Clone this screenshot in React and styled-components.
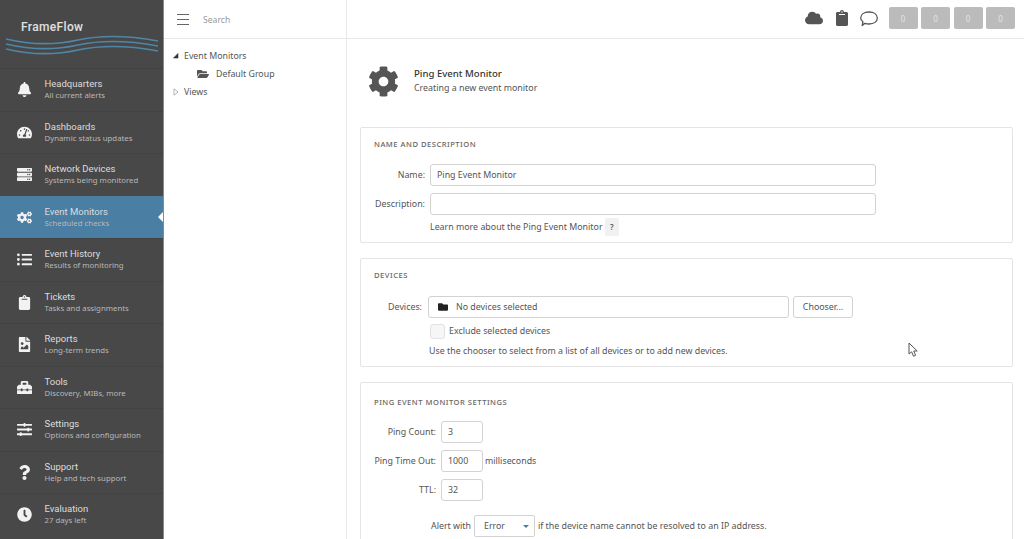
import React from "react";
import styled, { createGlobalStyle } from "styled-components";
import {
  FaBell, FaTachometerAlt, FaServer, FaCogs, FaListUl, FaClipboard, FaFileImage, FaToolbox,
  FaSlidersH, FaQuestion, FaClock, FaFolderOpen, FaFolder, FaCloud, FaCog,
} from "react-icons/fa";

const Global = createGlobalStyle`
  html, body { margin: 0; padding: 0; height: 539px; overflow: hidden; background: #fff; }
  * { box-sizing: border-box; }
  body { font-family: "Noto Sans", "Open Sans", sans-serif; font-size: 8.85px; color: #444; }
`;

const Shell = styled.div`display: flex; width: 1024px; height: 539px; overflow: hidden; position: relative;`;
const Sidebar = styled.nav`width: 164px; flex: none; background: #484848; border-right: 1px solid #8a8a8a; display: flex; flex-direction: column;`;
const Logo = styled.div`height: 68px; padding: 20px 0 0 6px; display: flex; flex-direction: column;`;
const LogoName = styled.div`font: 500 12px Roboto, sans-serif; letter-spacing: .35px; color: #e0e0e0; margin-left: 15px; height: 15px;`;
const Wave = styled.svg`display: block; width: 152px; height: 20px;`;
const NavItem = styled.div`
  height: 42.5px; flex: none; display: flex; align-items: center; position: relative;
  background: ${p => (p.$active ? "#4a7ea3" : "transparent")};
  border-top: 1px dotted ${p => (p.$active ? "#4a7ea3" : "#3e3e3e")};
`;
const NavIcon = styled.div`width: 44.5px; flex: none; display: flex; justify-content: center; padding-left: 5px; color: #f2f2f2; font-size: 15px; svg { display: block; }`;
const NavText = styled.div`display: flex; flex-direction: column; line-height: 12px;`;
const NavTitle = styled.span`font: 9.5px Roboto, sans-serif; color: #dcdcdc;`;
const NavSub = styled.span`font-size: 7.8px; color: #b8b8b8;`;
const Notch = styled.span`position: absolute; right: 0; top: 15px; border: 5px solid transparent; border-right: 5px solid #fff; border-left: 0;`;

const Column = styled.div`flex: 1; min-width: 0; display: flex; flex-direction: column;`;
const TopBar = styled.header`height: 39px; flex: none; display: flex; border-bottom: 1px solid #e8e8e8;`;
const SearchBox = styled.div`width: 183px; flex: none; border-right: 1px solid #e8e8e8; display: flex; align-items: center; padding: 1px 0 0 13px; gap: 14px;`;
const Burger = styled.div`width: 12px; height: 11px; border-top: 1px solid #666; border-bottom: 1px solid #666; position: relative;
  &::after { content: ""; position: absolute; left: 0; right: 0; top: 4px; height: 1px; background: #666; }`;
const SearchText = styled.span`font-size: 8.6px; color: #999;`;
const TopRight = styled.div`flex: 1; display: flex; align-items: center; justify-content: flex-end; padding: 0 9px 2px 0;`;
const TopIcons = styled.div`display: flex; align-items: center; margin-right: 11px; color: #555; svg { display: block; }`;
const TopIcon = styled.span`display: block; margin-left: ${p => p.$gap || 0}px; font-size: ${p => p.$size}px;`;
const Counters = styled.div`display: flex; gap: 3.5px;`;
const Counter = styled.div`width: 29px; height: 22px; background: #bbb; border-radius: 2px; color: #e4e4e4; font-size: 8px; display: flex; align-items: center; justify-content: center;`;

const Body = styled.div`flex: 1; min-height: 0; display: flex;`;
const Tree = styled.aside`width: 183px; flex: none; border-right: 1px solid #e8e8e8; padding: 8px 0 0 8px; display: flex; flex-direction: column;`;
const TreeRow = styled.div`height: 18px; display: flex; align-items: center; padding-left: ${p => p.$indent || 0}px; color: #555; font-size: 8.8px;`;
const CaretBox = styled.svg`width: 12px; height: 8px; flex: none; display: block;`;
const FolderIcon = styled.span`display: block; color: #555; font-size: 12px; margin-right: 7px; svg { display: block; }`;

const Main = styled.main`flex: 1; min-width: 0; padding: 27px 11px 0 13px; display: flex; flex-direction: column; gap: 15px; overflow: hidden;`;
const Hero = styled.div`display: flex; align-items: center; height: 46px; padding: 0 0 16px 8px; flex: none; color: #555;`;
const HeroIcon = styled.div`font-size: 31px; width: 46px; flex: none; svg { display: block; }`;
const HeroText = styled.div`display: flex; flex-direction: column; line-height: 14px;`;
const HeroTitle = styled.span`font-weight: 500; font-size: 9.6px; color: #333;`;
const HeroSub = styled.span`color: #555;`;
const Card = styled.section`flex: none; width: 653px; border: 1px solid #e4e4e4; border-radius: 2px; padding: ${p => p.$pad}px 13px 0; height: ${p => p.$h}px;`;
const CardTitle = styled.h3`margin: 0; font-size: 7.6px; line-height: 12px; font-weight: 500; letter-spacing: .5px; text-transform: uppercase; color: #666;`;
const Rows = styled.div`display: flex; flex-direction: column; gap: ${p => p.$gap}px; margin-top: ${p => p.$top}px;`;
const Row = styled.div`display: flex; align-items: center; min-height: 22px;`;
const Label = styled.label`flex: none; width: ${p => p.$w}px; margin-right: ${p => p.$gap}px; display: flex; justify-content: flex-end; white-space: nowrap; color: #555;`;
const Field = styled.div`
  flex: none; width: ${p => p.$w}px; height: 22px; border: 1px solid #d2d2d2; border-radius: 3px; background: #fff;
  display: flex; align-items: center; padding-left: ${p => p.$pad || 6}px; color: #555;
`;
const Hint = styled.div`display: flex; align-items: center; margin: ${p => p.$top || 0}px 0 0 ${p => p.$left}px; height: ${p => p.$h || 18}px; color: #555;`;
const Help = styled.span`width: 14px; height: 18px; margin-left: 0; background: #f1f1f1; border-radius: 2px; display: flex; align-items: center; justify-content: center; font-size: 8px; font-weight: 600;`;
const Chooser = styled.button`flex: none; width: 60px; height: 22px; margin-left: 4px; padding: 0; border: 1px solid #d2d2d2; border-radius: 3px; background: #fff; font: 8.85px "Noto Sans", sans-serif; color: #555;`;
const Check = styled.span`width: 15px; height: 15px; border: 1px solid #e2e2e2; background: #f6f6f6; border-radius: 3px; flex: none; margin-right: 4px;`;
const DarkFolder = styled.span`display: block; color: #222; font-size: 10px; margin-right: 8px; svg { display: block; }`;
const Unit = styled.span`margin-left: 2px; color: #555;`;
const AlertRow = styled.div`display: flex; align-items: center; margin: 14px 0 0 57px; color: #555; white-space: nowrap;`;
const Select = styled.div`width: 61px; height: 22px; flex: none; margin: 0 3px; border: 1px solid #d2d2d2; border-radius: 2px; padding-left: 9px; display: flex; align-items: center; justify-content: space-between;
  &::after { content: ""; margin-right: 5px; border-left: 3px solid transparent; border-right: 3px solid transparent; border-top: 3px solid #3f7fae; }`;
const Pointer = styled.svg`position: absolute; left: 908px; top: 342px;`;

const Caret = ({ open }) => (
  <CaretBox viewBox="0 0 12 8">
    {open
      ? <path d="M1.5 6 L6 1.5 L6 6 Z" fill="#333" stroke="#333" strokeWidth=".6" />
      : <path d="M2 .8 L6 4 L2 7.2 Z" fill="#fff" stroke="#aaa" strokeWidth=".9" />}
  </CaretBox>
);

const nav = [
  [FaBell, "Headquarters", "All current alerts"],
  [FaTachometerAlt, "Dashboards", "Dynamic status updates"],
  [FaServer, "Network Devices", "Systems being monitored"],
  [FaCogs, "Event Monitors", "Scheduled checks", true],
  [FaListUl, "Event History", "Results of monitoring"],
  [FaClipboard, "Tickets", "Tasks and assignments"],
  [FaFileImage, "Reports", "Long-term trends"],
  [FaToolbox, "Tools", "Discovery, MIBs, more"],
  [FaSlidersH, "Settings", "Options and configuration"],
  [FaQuestion, "Support", "Help and tech support"],
  [FaClock, "Evaluation", "27 days left"],
];

export default function App() {
  return (
    <Shell>
      <Global />
      <Sidebar>
        <Logo>
          <LogoName>FrameFlow</LogoName>
          <Wave viewBox="0 0 152 20" fill="none" stroke="#4f86a8" strokeWidth="1.7">
            <path d="M0 4 C25 10 50 10 72 5 C95 0 125 1 152 6" />
            <path d="M0 9 C25 15 50 15 72 10 C95 5 125 6 152 11" />
            <path d="M0 14 C25 20 50 20 72 15 C95 10 125 11 152 16" />
          </Wave>
        </Logo>
        {nav.map(([Icon, title, sub, active]) => (
          <NavItem key={title} $active={active}>
            <NavIcon><Icon /></NavIcon>
            <NavText>
              <NavTitle>{title}</NavTitle>
              <NavSub>{sub}</NavSub>
            </NavText>
            {active && <Notch />}
          </NavItem>
        ))}
      </Sidebar>
      <Column>
        <TopBar>
          <SearchBox><Burger /><SearchText>Search</SearchText></SearchBox>
          <TopRight>
            <TopIcons>
              <TopIcon $size={18}><FaCloud /></TopIcon>
              <TopIcon $size={16} $gap={11}><FaClipboard /></TopIcon>
              <TopIcon $gap={10} $size={18}>
                <svg width="18" height="17" viewBox="0 0 18 17" fill="none" stroke="#555" strokeWidth="1.3" strokeLinejoin="round">
                  <path d="M9 2 C14 2 17.3 4.5 17.3 8 C17.3 11.5 14 14 9 14 C7.6 14 6.3 13.8 5 13.3 L2.2 15.6 L2.9 11.8 C1.4 10.6 .7 9.4 .7 8 C.7 4.5 4 2 9 2 Z" />
                </svg>
              </TopIcon>
            </TopIcons>
            <Counters>{[0, 1, 2, 3].map(i => <Counter key={i}>0</Counter>)}</Counters>
          </TopRight>
        </TopBar>
        <Body>
          <Tree>
            <TreeRow><Caret open />Event Monitors</TreeRow>
            <TreeRow $indent={25}><FolderIcon><FaFolderOpen /></FolderIcon>Default Group</TreeRow>
            <TreeRow><Caret />Views</TreeRow>
          </Tree>
          <Main>
            <Hero>
              <HeroIcon><FaCog /></HeroIcon>
              <HeroText>
                <HeroTitle>Ping Event Monitor</HeroTitle>
                <HeroSub>Creating a new event monitor</HeroSub>
              </HeroText>
            </Hero>
            <Card $h={116} $pad={10}>
              <CardTitle>Name and description</CardTitle>
              <Rows $gap={7} $top={14}>
                <Row><Label $w={51} $gap={5}>Name:</Label><Field $w={446}>Ping Event Monitor</Field></Row>
                <Row><Label $w={51} $gap={5}>Description:</Label><Field $w={446} /></Row>
              </Rows>
              <Hint $left={56} $h={19} $top={2}>Learn more about the Ping Event Monitor&nbsp;<Help>?</Help></Hint>
            </Card>
            <Card $h={109} $pad={10}>
              <CardTitle>Devices</CardTitle>
              <Rows $gap={6} $top={15}>
                <Row>
                  <Label $w={48} $gap={6}>Devices:</Label>
                  <Field $w={361} $pad={9}><DarkFolder><FaFolder /></DarkFolder>No devices selected</Field>
                  <Chooser>Chooser...</Chooser>
                </Row>
              </Rows>
              <Hint $left={56} $h={16} $top={5}><Check />Exclude selected devices</Hint>
              <Hint $left={55} $h={16} $top={4}>Use the chooser to select from a list of all devices or to add new devices.</Hint>
            </Card>
            <Card $h={200} $pad={13}>
              <CardTitle>Ping Event Monitor Settings</CardTitle>
              <Rows $gap={7} $top={13}>
                <Row><Label $w={62} $gap={5}>Ping Count:</Label><Field $w={42}>3</Field></Row>
                <Row><Label $w={62} $gap={5}>Ping Time Out:</Label><Field $w={42}>1000</Field><Unit>milliseconds</Unit></Row>
                <Row><Label $w={62} $gap={5}>TTL:</Label><Field $w={42}>32</Field></Row>
              </Rows>
              <AlertRow>Alert with<Select>Error</Select>if the device name cannot be resolved to an IP address.</AlertRow>
            </Card>
          </Main>
        </Body>
      </Column>
      <Pointer width="11" height="16" viewBox="0 0 11 16">
        <path d="M1 1 L1 12 L3.6 9.8 L5.5 14.2 L7.6 13.3 L5.7 9 L9.2 9 Z" fill="#fff" stroke="#555" strokeWidth="1" />
      </Pointer>
    </Shell>
  );
}
